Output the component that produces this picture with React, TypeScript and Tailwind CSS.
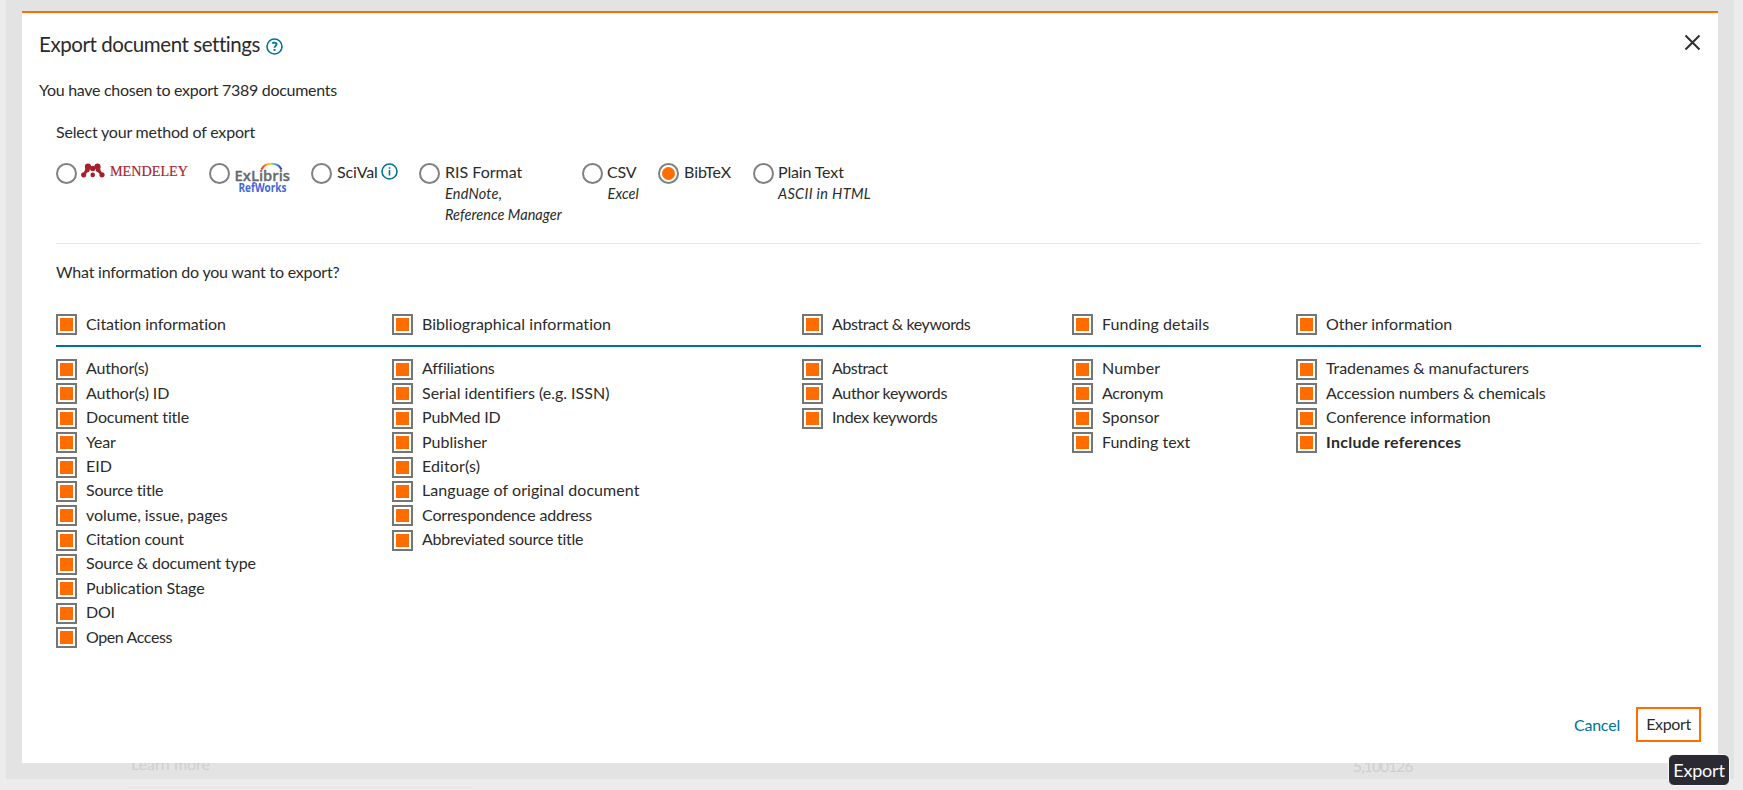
import React from "react";

type Item = { label: string; bold?: boolean; track?: string };
type Group = { title: string; track?: string; items: Item[] };

const groups: Group[] = [
  {
    title: "Citation information",
    track: "tracking-[-0.07px]",
    items: [
      { label: "Author(s)", track: "tracking-[-0.18px]" },
      { label: "Author(s) ID", track: "tracking-[-0.12px]" },
      { label: "Document title", track: "tracking-[-0.18px]" },
      { label: "Year", track: "tracking-[-0.2px]" },
      { label: "EID" },
      { label: "Source title", track: "tracking-[-0.2px]" },
      { label: "volume, issue, pages", track: "tracking-[-0.04px]" },
      { label: "Citation count", track: "tracking-[-0.15px]" },
      { label: "Source & document type", track: "tracking-[-0.19px]" },
      { label: "Publication Stage", track: "tracking-[-0.14px]" },
      { label: "DOI", track: "tracking-[-0.2px]" },
      { label: "Open Access", track: "tracking-[-0.4px]" },
    ],
  },
  {
    title: "Bibliographical information",
    track: "tracking-[0.03px]",
    items: [
      { label: "Affiliations", track: "tracking-[-0.25px]" },
      { label: "Serial identifiers (e.g. ISSN)" },
      { label: "PubMed ID", track: "tracking-[-0.15px]" },
      { label: "Publisher" },
      { label: "Editor(s)", track: "tracking-[0.1px]" },
      { label: "Language of original document", track: "tracking-[0.06px]" },
      { label: "Correspondence address", track: "tracking-[-0.15px]" },
      { label: "Abbreviated source title", track: "tracking-[-0.27px]" },
    ],
  },
  {
    title: "Abstract & keywords",
    track: "tracking-[-0.41px]",
    items: [
      { label: "Abstract", track: "tracking-[-0.5px]" },
      { label: "Author keywords", track: "tracking-[-0.33px]" },
      { label: "Index keywords", track: "tracking-[-0.31px]" },
    ],
  },
  {
    title: "Funding details",
    track: "tracking-[0.08px]",
    items: [
      { label: "Number", track: "tracking-[0.15px]" },
      { label: "Acronym", track: "tracking-[-0.25px]" },
      { label: "Sponsor" },
      { label: "Funding text" },
    ],
  },
  {
    title: "Other information",
    track: "tracking-[-0.04px]",
    items: [
      { label: "Tradenames & manufacturers", track: "tracking-[-0.09px]" },
      { label: "Accession numbers & chemicals", track: "tracking-[-0.11px]" },
      { label: "Conference information", track: "tracking-[-0.09px]" },
      { label: "Include references", bold: true, track: "tracking-[0.27px]" },
    ],
  },
];

function Check({ label, bold, track, heading }: Item & { heading?: boolean }) {
  return (
    <label className="flex h-[24.375px] items-start">
      <span className="flex size-[21px] shrink-0 items-center justify-center border-2 border-[#757575] bg-white">
        <span className="size-[13px] bg-[#ff6c00]" />
      </span>
      <span className={`ml-[9px] whitespace-nowrap leading-[20px] ${heading ? "mt-0" : "-mt-[0.6px]"} ${bold ? "font-bold" : ""} ${track ?? ""}`}>{label}</span>
    </label>
  );
}

function Radio({ checked }: { checked?: boolean }) {
  return (
    <span className="flex size-[21px] shrink-0 items-center justify-center rounded-full border-2 border-[#808080] bg-white">
      {checked && <span className="size-[13px] rounded-full bg-[#ff6c00]" />}
    </span>
  );
}

function Option({ width, checked, children }: { width: string; checked?: boolean; children: React.ReactNode }) {
  return (
    <label className={`flex items-start gap-[5px] ${width}`}>
      <Radio checked={checked} />
      <span className="-mt-[1px] whitespace-nowrap leading-[20px]">{children}</span>
    </label>
  );
}

function Note({ track, children }: { track: string; children: React.ReactNode }) {
  return <span className={`relative top-px block text-[14.500px] italic leading-[21px] ${track}`}>{children}</span>;
}

function MendeleyLogo() {
  return (
    <svg className="-ml-[1px] block overflow-visible" width="108" height="18" viewBox="0 0 108 18">
      <g fill="#a5202b">
        <circle cx="7" cy="4.6" r="3.1" />
        <circle cx="16.500" cy="4.600" r="3.100" />
        <circle cx="11.750" cy="6.500" r="2.700" />
        <circle cx="2.700" cy="12.800" r="2.600" />
        <circle cx="11.750" cy="12.900" r="2.300" />
        <circle cx="21" cy="12.800" r="2.600" />
        <path d="M4.200 5h4.500v4L5 12 2.500 10.500C4 9 4.500 7 4.200 5zM19.300 5h-4.500v4l3.700 3 2.500-1.500C19.500 9 19 7 19.300 5z" />
        <circle cx="7.200" cy="12" r="1.700" fill="#fff" />
        <circle cx="16.300" cy="12" r="1.700" fill="#fff" />
      </g>
      <text x="29" y="14" fill="#a8252f" stroke="#a8252f" strokeWidth=".2" fontSize="15.500" fontFamily="Liberation Serif, serif" textLength="78" lengthAdjust="spacingAndGlyphs">MENDELEY</text>
    </svg>
  );
}

function RefWorksLogo() {
  return (
    <svg className="block overflow-visible" width="58" height="32" viewBox="0 0 58 32">
      <defs>
        <linearGradient id="arc" x1="0" x2="1" y1="0" y2="0">
          <stop offset="0" stopColor="#e8322c" />
          <stop offset=".25" stopColor="#f9a01b" />
          <stop offset=".45" stopColor="#e8d820" />
          <stop offset=".62" stopColor="#4fc0d8" />
          <stop offset="1" stopColor="#3338b8" />
        </linearGradient>
      </defs>
      <path d="M26.500 7.500C30-.2 43-.2 46.500 7.500" fill="none" stroke="url(#arc)" strokeWidth="2.200" />
      <text x="-.5" y="19" fill="#66696e" stroke="#66696e" strokeWidth=".3" fontSize="15" fontWeight="600" fontFamily="Open Sans, sans-serif" textLength="55.500" lengthAdjust="spacingAndGlyphs">ExLibris</text>
      <text x="3.500" y="29.800" fill="#3f68d8" fontSize="11.500" fontWeight="700" fontFamily="Open Sans, sans-serif" textLength="48" lengthAdjust="spacingAndGlyphs">RefWorks</text>
    </svg>
  );
}

function HelpIcon() {
  return (
    <svg className="-ml-[0.500px] mt-[3px] block" width="17" height="17" viewBox="0 0 17 17" fill="none" stroke="#007398" strokeWidth="1.6">
      <circle cx="8.500" cy="8.500" r="7.500" />
      <path d="M6.300 5.400Q6.800 4.600 8.400 4.600c1.400 0 2.200.7 2.200 1.700C10.600 7.800 8.500 7.900 8.500 9.700" strokeWidth="1.800" />
      <path d="M8.500 11v1.800" strokeWidth="2" />
    </svg>
  );
}

function InfoIcon() {
  return (
    <svg className="mt-px block" width="17" height="17" viewBox="0 0 17 17" fill="none" stroke="#007398" strokeWidth="1.600">
      <circle cx="8.500" cy="8.500" r="7.500" />
      <path d="M8.500 7v5.500M8.500 4.200v1.600" />
    </svg>
  );
}

export default function App() {
  return (
    <div className="relative h-[790px] w-[1743px] overflow-hidden bg-[#ececec] pl-[6px] text-[16px] text-[#2b2b2b] [font-family:Lato,sans-serif] [font-variant-ligatures:none]">
      <div className="h-[779px] w-[1728px] bg-[#e3e3e3] px-[16px] pt-[11px]">
        <section className="flex h-[752px] flex-col border-t-2 border-[#ff6c00] bg-white">
          <header className="flex items-start justify-between pl-[17px] pr-[17px] pt-[18px]">
            <h1 className="flex h-[28px] gap-[6px] whitespace-nowrap text-[20.500px] leading-[26px]">
              <span className="w-[221px] tracking-[-0.43px]">Export document settings</span>
              <span className="pt-[4px]"><HelpIcon /></span>
            </h1>
            <svg className="mt-[3px]" width="17" height="17" viewBox="0 0 17 17" stroke="#2e2e2e" strokeWidth="2">
              <path d="M1.500 1.500l14 14M15.500 1.500l-14 14" />
            </svg>
          </header>
          <p className="mt-[20px] pl-[17px] leading-[22px] tracking-[-0.29px]">You have chosen to export 7389 documents</p>
          <div className="ml-[34px] mr-[17px]">
            <p className="mt-[20px] leading-[22px] tracking-[-0.2px]">Select your method of export</p>
            <div className="mt-[20px] flex h-[81px] border-b border-[#e6e6e6]">
              <Option width="w-[153px]"><MendeleyLogo /></Option>
              <Option width="w-[102px]"><RefWorksLogo /></Option>
              <Option width="w-[108px]"><span className="flex gap-[4px]"><span className="w-[40px] tracking-[-0.15px]">SciVal</span><InfoIcon /></span></Option>
              <Option width="w-[163px]">RIS Format<Note track="tracking-[0.2px]">EndNote,</Note><Note track="tracking-[0.05px]">Reference Manager</Note></Option>
              <Option width="w-[76px]"><span className="-ml-px tracking-[-0.2px]">CSV</span><Note track="tracking-[0.1px] -ml-[0.500px]">Excel</Note></Option>
              <Option width="w-[95px]" checked>BibTeX</Option>
              <Option width="w-[130px]"><span className="-ml-px tracking-[-0.15px]">Plain Text</span><Note track="-ml-px tracking-[0.33px]">ASCII in HTML</Note></Option>
            </div>
            <p className="mt-[17px] leading-[22px] tracking-[-0.2px]">What information do you want to export?</p>
            <div className="mt-[31px] grid h-[33px] grid-cols-[336px_410px_270px_224px_1fr] border-b-2 border-[#007398]">
              {groups.map((g) => <Check key={g.title} label={g.title} track={g.track} heading />)}
            </div>
            <div className="mt-[12px] grid grid-cols-[336px_410px_270px_224px_1fr]">
              {groups.map((g) => (
                <div key={g.title}>
                  {g.items.map((i) => <Check key={i.label} {...i} />)}
                </div>
              ))}
            </div>
          </div>
          <footer className="mb-[21px] mr-[17px] mt-auto flex items-center justify-end gap-[16px]">
            <button className="tracking-[-0.2px] text-[#007398]">Cancel</button>
            <button className="h-[35px] w-[65px] border-2 border-[#ff6c00] pb-[2px] tracking-[-0.35px]">Export</button>
          </footer>
        </section>
        <div className="flex h-[14px] overflow-hidden leading-[22px] text-[#cfcfcf]">
          <span className="-mt-[10px] ml-[109px] w-[1222px]">Learn more</span>
          <span className="-mt-[8px] text-[15.500px] tracking-[-0.85px]">5,100126</span>
        </div>
      </div>
      <div className="ml-[122px] mt-[8px] h-px w-[345px] rounded-full bg-[#e5e5e5]" />
      <div className="absolute left-[1668px] top-[754px] flex h-[32px] w-[62px] items-center justify-center rounded-[6px] border border-[#f7f7f7] bg-[#2b2a33] text-[18px] tracking-[-0.2px] text-[#fbfbfe]">Export</div>
    </div>
  );
}
